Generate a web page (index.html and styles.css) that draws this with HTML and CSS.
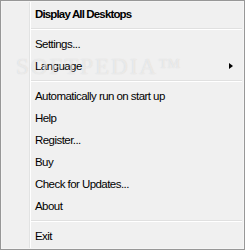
FILE: index.html
```html
<!DOCTYPE html>
<html>
<head>
<meta charset="utf-8">
<link rel="stylesheet" href="styles.css">
</head>
<body>
<div class="menu">
  <div class="item bold">Display All Desktops</div>
  <div class="sep"></div>
  <div class="item">Settings...</div>
  <div class="item">Language<span class="arrow"></span></div>
  <div class="sep"></div>
  <div class="item">Automatically run on start up</div>
  <div class="item">Help</div>
  <div class="item">Register...</div>
  <div class="item">Buy</div>
  <div class="item">Check for Updates...</div>
  <div class="item">About</div>
  <div class="sep"></div>
  <div class="item">Exit</div>
  <div class="watermark"></div>
</div>
</body>
</html>
```
FILE: styles.css
```css
html, body {
  margin: 0;
  padding: 0;
  background: #f0f0f0;
}
.menu {
  position: relative;
  box-sizing: border-box;
  width: 245px;
  height: 250px;
  border: 1px solid #979797;
  box-shadow: inset 0 0 0 1px #f5f5f5;
  padding: 2px;
  background: #f0f0f0 linear-gradient(to right, transparent 28px, #e2e3e3 28px, #e2e3e3 29px, #ffffff 29px, #ffffff 30px, transparent 30px);
  font-family: "Liberation Sans", Arial, sans-serif;
  font-size: 11.5px;
  letter-spacing: -0.55px;
  color: #000;
}
.item {
  position: relative;
  height: 22px;
  line-height: 22px;
  padding-left: 32px;
  white-space: nowrap;
}
.bold {
  font-weight: bold;
  letter-spacing: -0.85px;
}
.sep {
  box-sizing: border-box;
  height: 8px;
  padding-top: 3px;
  margin-left: 28px;
}
.sep::before {
  content: "";
  display: block;
  height: 1px;
  background: #e0e0e0;
  border-bottom: 1px solid #ffffff;
}
.arrow {
  position: absolute;
  left: 226px;
  top: 8px;
  width: 0;
  height: 0;
  border-top: 3.5px solid transparent;
  border-bottom: 3.5px solid transparent;
  border-left: 4px solid #000;
}
.watermark {
  position: absolute;
  left: 15px;
  top: 53px;
  pointer-events: none;
}
.watermark::after {
  content: "SOFTPEDIA\2122";
  font-family: "Liberation Serif", serif;
  font-size: 23px;
  letter-spacing: 2px;
  color: rgba(255, 255, 255, 0.5);
  text-shadow: 0 0 1px rgba(150, 150, 150, 0.35);
}
```
